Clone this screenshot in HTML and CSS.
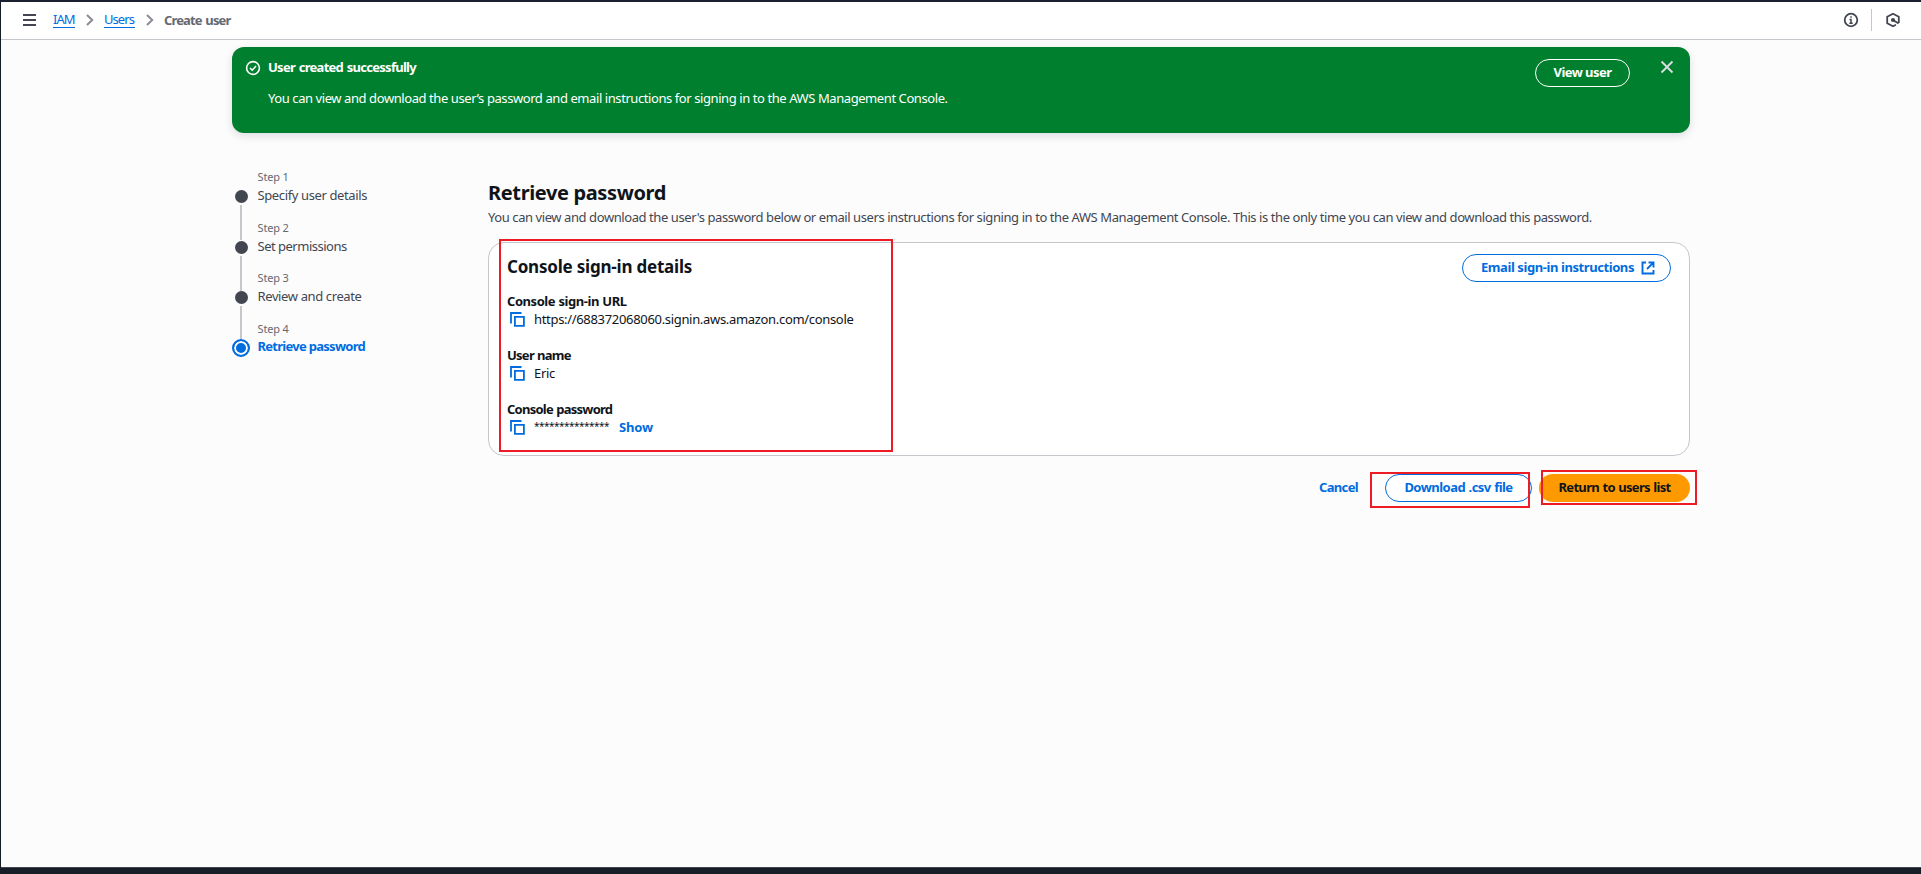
FILE: index.html
```html
<!DOCTYPE html>
<html lang="en">
<head>
<meta charset="utf-8">
<title>Create user | IAM</title>
<link rel="stylesheet" href="styles.css">
</head>
<body>
<header class="topbar">
  <svg class="menu-icon" width="13" height="12" viewBox="0 0 13 12"><path d="M0 1h13M0 6h13M0 11h13" stroke="#424650" stroke-width="1.800"/></svg>
  <nav class="crumbs">
    <a class="crumb-link iam">IAM</a>
    <svg class="chev" width="8" height="12" viewBox="0 0 8 12"><path d="M1 1l5.200 5L1 11" fill="none" stroke="#8c8c94" stroke-width="2"/></svg>
    <a class="crumb-link users">Users</a>
    <svg class="chev" width="8" height="12" viewBox="0 0 8 12"><path d="M1 1l5.200 5L1 11" fill="none" stroke="#8c8c94" stroke-width="2"/></svg>
    <b class="crumb-now">Create user</b>
  </nav>
  <div class="tools">
    <svg width="16" height="16" viewBox="0 0 16 16" fill="none" stroke="#424650"><circle cx="8" cy="8" r="6.300" stroke-width="1.800"/><path d="M8 4.200v1.600M6.500 7.400H8v4M6.300 11.200h3.400" stroke-width="1.500"/></svg>
    <i class="tool-sep"></i>
    <svg class="hex" width="16" height="16" viewBox="0 0 16 16" fill="none" stroke="#424650" stroke-width="1.800"><path d="M11 12.800L8 14.300 2.200 11.200V4.800L8 1.700l5.800 3.100v6.200M8 8l5.600 3.600"/><circle cx="8" cy="8" r="2.100" fill="#424650" stroke="none"/></svg>
  </div>
</header>

<main class="page">
  <section class="flash">
    <svg class="ok" width="16" height="16" viewBox="0 0 16 16" fill="none" stroke="#fff"><circle cx="8" cy="8" r="6.400" stroke-width="1.600"/><path d="M5 8l2.200 2.200L11 6" stroke-width="1.600"/></svg>
    <div class="flash-text">
      <b class="flash-title">User created successfully</b>
      <p class="flash-body">You can view and download the user’s password and email instructions for signing in to the AWS Management Console.</p>
    </div>
    <button class="btn btn-flash"><span>View user</span></button>
    <svg class="close" width="14" height="14" viewBox="0 0 14 14"><path d="M1.500 1.500l11 11M12.500 1.500l-11 11" stroke="#dedee3" stroke-width="1.800"/></svg>
  </section>

  <div class="columns">
    <ol class="steps">
      <li class="step"><span class="marker"><i class="dot"></i><i class="line"></i></span><div><small class="step-no">Step 1</small><div class="step-name">Specify user details</div></div></li>
      <li class="step"><span class="marker"><i class="dot"></i><i class="line"></i></span><div><small class="step-no">Step 2</small><div class="step-name tight">Set permissions</div></div></li>
      <li class="step"><span class="marker"><i class="dot"></i><i class="line"></i></span><div><small class="step-no">Step 3</small><div class="step-name">Review and create</div></div></li>
      <li class="step active"><span class="marker"><i class="dot"></i></span><div><small class="step-no">Step 4</small><div class="step-name">Retrieve password</div></div></li>
    </ol>

    <section class="content">
      <h1 class="title">Retrieve password</h1>
      <p class="desc">You can view and download the user's password below or email users instructions for signing in to the AWS Management Console. This is the only time you can view and download this password.</p>

      <div class="card">
        <div class="card-main">
          <h2 class="card-title">Console sign-in details</h2>
          <div class="field">
            <b class="label label-url">Console sign-in URL</b>
            <div class="value"><svg class="copy" width="15" height="15" viewBox="0 0 15 15" fill="none" stroke="#006ce0"><path d="M11.500 1H1v10.500" stroke-width="1.800"/><path d="M4.900 4.900h9v9H4.900z" stroke-width="1.800"/></svg><span class="url">https://688372068060.signin.aws.amazon.com/console</span></div>
          </div>
          <div class="field">
            <b class="label">User name</b>
            <div class="value"><svg class="copy" width="15" height="15" viewBox="0 0 15 15" fill="none" stroke="#006ce0"><path d="M11.500 1H1v10.500" stroke-width="1.800"/><path d="M4.900 4.900h9v9H4.900z" stroke-width="1.800"/></svg><span class="url">Eric</span></div>
          </div>
          <div class="field">
            <b class="label">Console password</b>
            <div class="value"><svg class="copy" width="15" height="15" viewBox="0 0 15 15" fill="none" stroke="#006ce0"><path d="M11.500 1H1v10.500" stroke-width="1.800"/><path d="M4.900 4.900h9v9H4.900z" stroke-width="1.800"/></svg><span class="stars">***************</span><a class="show">Show</a></div>
          </div>
        </div>
        <button class="btn btn-email"><span>Email sign-in instructions</span><svg width="14" height="14" viewBox="0 0 14 14" fill="none" stroke="#006ce0" stroke-width="1.900"><path d="M5 1.500H1.500v11h11V9M7.500 1.500h5v5M12.300 1.700L6 8"/></svg></button>
        <i class="mark mark-details"></i>
      </div>

      <div class="actions">
        <a class="cancel">Cancel</a>
        <button class="btn btn-csv"><span>Download .csv file</span><i class="mark mark-csv"></i></button>
        <button class="btn btn-return"><span>Return to users list</span><i class="mark mark-return"></i></button>
      </div>
    </section>
  </div>
</main>
<footer class="footer"></footer>
</body>
</html>
```
FILE: styles.css
```css
* { box-sizing: border-box; }
body {
  margin: 0;
  height: 874px;
  overflow: hidden;
  display: flex;
  flex-direction: column;
  border-left: 1px solid #161d26;
  border-top: 2px solid #1b2030;
  background: #fcfcfd;
  color: #0f141a;
  font: 13px/20px "Noto Sans", "Open Sans", sans-serif;
  letter-spacing: -0.42px;
}
svg { display: block; flex: none; }
h1, h2, p, ol { margin: 0; padding: 0; }
span, a, b, p { white-space: nowrap; }

.topbar {
  height: 38px;
  flex: none;
  display: flex;
  align-items: center;
  background: #fff;
  border-bottom: 1px solid #c6c6cd;
  padding: 0 20px 2px 22px;
}
.crumbs { display: flex; align-items: center; margin-left: 17px; }
.crumb-link { color: #006ce0; border-bottom: 1px solid #006ce0; line-height: 16px; height: 17px; letter-spacing: -0.93px; }
.iam { width: 22px; }
.users { width: 31px; }
.chev { margin: 0 10px 0 11px; }
.crumb-now { color: #656871; letter-spacing: -0.85px; word-spacing: 1px; }
.tools { margin-left: auto; display: flex; align-items: center; }
.tool-sep { width: 1px; height: 22px; background: #c6c6cd; margin: 0 13px 0 12px; }

.page { width: 1458px; margin: 7px 0 0 231px; flex: 1; }
.flash {
  height: 86px;
  display: flex;
  background: #00802f;
  border-radius: 12px;
  box-shadow: 0 3px 8px rgba(0, 7, 22, .12);
  color: #fff;
  padding: 12px 16px 0 13px;
}
.ok { margin-top: 1px; }
.flash-text { margin-left: 7px; flex: 1; margin-top: -2px; }
.flash-title { display: block; letter-spacing: -0.72px; word-spacing: 1px; }
.flash-body { margin-top: 11px; }
.btn {
  display: flex;
  align-items: center;
  justify-content: center;
  height: 28px;
  border-radius: 14px;
  padding: 0;
  font: bold 13px/20px "Noto Sans", "Open Sans", sans-serif;
  position: relative;
}
.btn span { padding-bottom: 2px; }
.btn-flash { width: 95px; background: none; border: 1px solid #fff; color: #fff; margin-right: 30px; letter-spacing: -0.54px; }
.close { margin-top: 1px; }

.columns { display: flex; }
.steps { width: 256px; list-style: none; padding-top: 34px; }
.step { display: flex; height: 50.500px; }
.marker { width: 18px; margin-right: 7.500px; display: flex; flex-direction: column; align-items: center; padding-top: 23px; }
.dot { width: 13px; height: 13px; border-radius: 50%; background: #424650; flex: none; }
.line { width: 2px; height: 35px; background: #c6c6cd; margin-top: 2px; flex: none; }
.step-no { display: block; font-size: 11px; line-height: 18px; color: #656871; letter-spacing: -0.15px; padding-top: 1px; }
.step-name { color: #424650; line-height: 20px; margin-top: -1px; letter-spacing: -0.38px; }
.step-name.tight { letter-spacing: -0.5px; }
.active .dot { width: 18px; height: 18px; margin-top: -3px; border: 2px solid #006ce0; background: #006ce0; box-shadow: inset 0 0 0 2px #fcfcfd; }
.active .step-name { color: #006ce0; font-weight: bold; letter-spacing: -0.72px; margin-top: -2px; }

.content { width: 1202px; padding-top: 46px; }
.title { font-size: 20px; line-height: 28px; letter-spacing: -0.37px; }
.desc { color: #424650; line-height: 20px; }
.card {
  position: relative;
  margin-top: 15px;
  height: 214px;
  border: 1px solid #c6c6cd;
  border-radius: 16px;
  background: #fff;
  display: flex;
  justify-content: space-between;
  padding: 11px 18px 0;
}
.card-title { font-size: 17px; line-height: 28px; letter-spacing: -0.21px; margin-top: -1px; }
.field { height: 54px; }
.card-title + .field { margin-top: 11px; }
.label { display: block; line-height: 18px; letter-spacing: -0.74px; word-spacing: 0.500px; }
.label-url { letter-spacing: -0.45px; }
.value { display: flex; line-height: 18px; }
.url { letter-spacing: -0.32px; }
.copy { margin: 2px 9px 0 3px; }
.stars { font-size: 10px; letter-spacing: -0.51px; line-height: 17px; }
.show { color: #006ce0; font-weight: bold; margin-left: 10px; letter-spacing: -0.15px; }
.btn-email { width: 209px; background: #fff; border: 1px solid #006ce0; color: #006ce0; gap: 7px; padding-left: 3px; letter-spacing: -0.42px; }
.actions { display: flex; justify-content: flex-end; margin-top: 18px; align-items: center; }
.cancel { color: #006ce0; font-weight: bold; margin-right: 27px; letter-spacing: -0.65px; padding-bottom: 2px; }
.btn-csv { width: 147px; background: #fff; border: 1px solid #006ce0; color: #006ce0; margin-right: 7px; letter-spacing: -0.52px; word-spacing: 0.500px; }
.btn-return { width: 151px; background: #ff9900; border: 0; color: #0f141a; letter-spacing: -0.66px; word-spacing: 0.600px; }

.mark { position: absolute; border: 2px solid #ed1c24; }
.mark-details { left: 10px; top: -4px; width: 394px; height: 213px; }
.mark-csv { left: -16px; top: -3px; width: 160px; height: 36px; }
.mark-return { left: 2px; top: -4px; width: 156px; height: 35px; }
.footer { height: 7px; flex: none; background: #161d26; border-top: 1px solid #424650; }
```
